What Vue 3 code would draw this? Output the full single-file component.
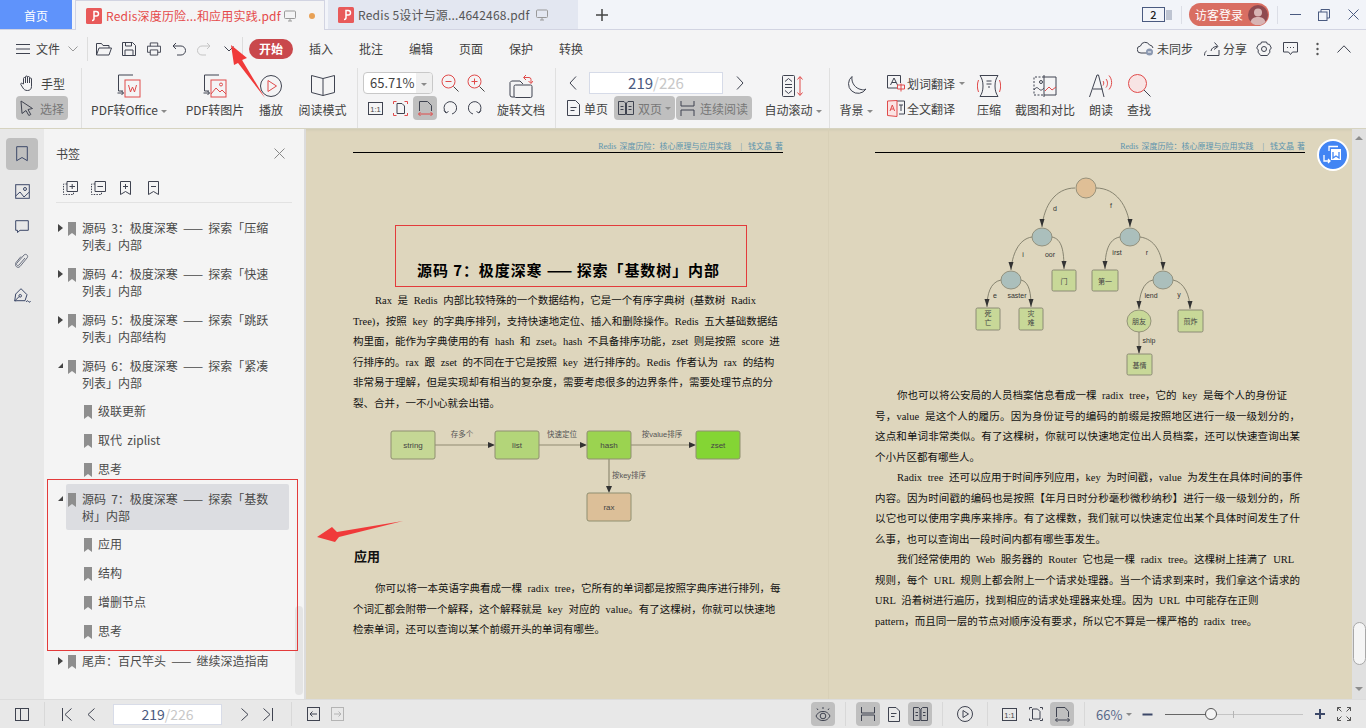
<script setup>
const bookmarks = [
  { text: '源码 3：极度深寒 —— 探索「压缩列表」内部', arrow: 'closed' },
  { text: '源码 4：极度深寒 —— 探索「快速列表」内部', arrow: 'closed' },
  { text: '源码 5：极度深寒 —— 探索「跳跃列表」内部结构', arrow: 'closed' },
  { text: '源码 6：极度深寒 —— 探索「紧凑列表」内部', arrow: 'open' },
  { text: '级联更新', child: true },
  { text: '取代 ziplist', child: true },
  { text: '思考', child: true },
  { text: '源码 7：极度深寒 —— 探索「基数树」内部', arrow: 'open', active: true },
  { text: '应用', child: true },
  { text: '结构', child: true },
  { text: '增删节点', child: true },
  { text: '思考', child: true },
  { text: '尾声：百尺竿头 —— 继续深造指南', arrow: 'closed', single: true }
]

const introLines = [
  { t: 'Rax 是 Redis 内部比较特殊的一个数据结构，它是一个有序字典树 (基数树 Radix', i: true, w: 380 },
  { t: 'Tree)，按照 key 的字典序排列，支持快速地定位、插入和删除操作。Redis 五大基础数据结', w: 424 },
  { t: '构里面，能作为字典使用的有 hash 和 zset。hash 不具备排序功能，zset 则是按照 score 进', w: 424 },
  { t: '行排序的。rax 跟 zset 的不同在于它是按照 key 进行排序的。Redis 作者认为 rax 的结构', w: 418 },
  { t: '非常易于理解，但是实现却有相当的复杂度，需要考虑很多的边界条件，需要处理节点的分', w: 420 },
  { t: '裂、合并，一不小心就会出错。' }
]

const usageLines = [
  { t: '你可以将一本英语字典看成一棵 radix tree，它所有的单词都是按照字典序进行排列，每', i: true, w: 403 },
  { t: '个词汇都会附带一个解释，这个解释就是 key 对应的 value。有了这棵树，你就可以快速地', w: 421 },
  { t: '检索单词，还可以查询以某个前缀开头的单词有哪些。' }
]

const rightLines = [
  { t: '你也可以将公安局的人员档案信息看成一棵 radix tree，它的 key 是每个人的身份证', i: true, w: 388 },
  { t: '号，value 是这个人的履历。因为身份证号的编码的前缀是按照地区进行一级一级划分的，', w: 425 },
  { t: '这点和单词非常类似。有了这棵树，你就可以快速地定位出人员档案，还可以快速查询出某', w: 425 },
  { t: '个小片区都有哪些人。' },
  { t: 'Radix tree 还可以应用于时间序列应用，key 为时间戳，value 为发生在具体时间的事件', i: true, w: 403 },
  { t: '内容。因为时间戳的编码也是按照【年月日时分秒毫秒微秒纳秒】进行一级一级划分的，所', w: 425 },
  { t: '以它也可以使用字典序来排序。有了这棵数，我们就可以快速定位出某个具体时间发生了什', w: 425 },
  { t: '么事，也可以查询出一段时间内都有哪些事发生。' },
  { t: '我们经常使用的 Web 服务器的 Router 它也是一棵 radix tree。这棵树上挂满了 URL', i: true, w: 395 },
  { t: '规则，每个 URL 规则上都会附上一个请求处理器。当一个请求到来时，我们拿这个请求的', w: 425 },
  { t: 'URL 沿着树进行遍历，找到相应的请求处理器来处理。因为 URL 中可能存在正则', w: 381 },
  { t: 'pattern，而且同一层的节点对顺序没有要求，所以它不算是一棵严格的 radix tree。', w: 349 }
]

const flowBoxes = [
  { x: 391, y: 431, label: 'string', fill: '#c5d795' },
  { x: 495, y: 431, label: 'list', fill: '#b3d579' },
  { x: 587, y: 431, label: 'hash', fill: '#9bd350' },
  { x: 696, y: 431, label: 'zset', fill: '#84d534' },
  { x: 587, y: 493, label: 'rax', fill: '#dcbf98' }
]

const flowLabels = [
  { x: 462, y: 437, t: '存多个' },
  { x: 562, y: 437, t: '快速定位' },
  { x: 662, y: 437, t: '按value排序' },
  { x: 629, y: 478, t: '按key排序' }
]

const treeEdges = [
  'M1075 187C1055 187 1044 205 1042 226',
  'M1096 187C1116 187 1128 205 1130 226',
  'M1032 236C1018 238 1012 255 1011 269',
  'M1052 236C1062 238 1064 250 1064 268',
  'M1120 236C1108 238 1105 252 1105 268',
  'M1140 236C1155 238 1162 252 1163 269',
  'M1001 279C990 281 987 294 987 306',
  'M1021 279C1030 281 1031 294 1031 306',
  'M1153 279C1143 281 1139 294 1139 308',
  'M1173 279C1184 281 1190 294 1190 308',
  'M1139 331V352'
]

const treeCircles = [
  { x: 1086, y: 187, rx: 10, ry: 10, fill: '#dfbf96' },
  { x: 1042, y: 236, rx: 10, ry: 9, fill: '#abbfbc' },
  { x: 1130, y: 236, rx: 10, ry: 9, fill: '#abbfbc' },
  { x: 1011, y: 279, rx: 10, ry: 9, fill: '#abbfbc' },
  { x: 1163, y: 279, rx: 10, ry: 9, fill: '#abbfbc' }
]

const treeBoxes = [
  { x: 1052, y: 269, w: 24, h: 21, t: ['门'] },
  { x: 1092, y: 269, w: 26, h: 21, t: ['第一'] },
  { x: 976, y: 307, w: 24, h: 22, t: ['死', '亡'] },
  { x: 1019, y: 307, w: 24, h: 22, t: ['灾', '难'] },
  { x: 1178, y: 309, w: 25, h: 22, t: ['煎炸'] },
  { x: 1127, y: 353, w: 25, h: 21, t: ['基情'] }
]

const treeLabels = [
  { x: 1055, y: 210, t: 'd' }, { x: 1111, y: 207, t: 'f' },
  { x: 1023, y: 256, t: 'i' }, { x: 1050, y: 256, t: 'oor' },
  { x: 1117, y: 254, t: 'irst' }, { x: 1147, y: 254, t: 'r' },
  { x: 995, y: 297, t: 'e' }, { x: 1017, y: 297, t: 'saster' },
  { x: 1151, y: 297, t: 'lend' }, { x: 1179, y: 296, t: 'y' },
  { x: 1149, y: 342, t: 'ship' }
]

const menuTabs = ['插入', '批注', '编辑', '页面', '保护', '转换']
</script>

<template>
  <div class="app">
    <!-- tab bar -->
    <div class="tabbar">
      <div class="tab-home">首页</div>
      <div class="tab tab-on">
        <svg class="pdf-badge" viewBox="0 0 16 16"><rect width="16" height="16" rx="1.5" fill="#e85a5a"/><path d="M8 3.500h2.200a2.300 2.300 0 0 1 0 4.600H8zM8 8v2.500a2 2 0 0 1-2 2" fill="none" stroke="#fff" stroke-width="1.500"/></svg>
        <span class="tab-name">Redis深度历险...和应用实践.pdf</span>
        <svg class="ic monitor" viewBox="0 0 12 12"><rect x=".5" y="1" width="11" height="7.500" rx="1"/><path d="M4 11h4M6 8.500V11"/></svg>
        <i class="dot"></i>
      </div>
      <div class="tab">
        <svg class="pdf-badge" viewBox="0 0 16 16"><rect width="16" height="16" rx="1.5" fill="#e85a5a"/><path d="M8 3.500h2.200a2.300 2.300 0 0 1 0 4.600H8zM8 8v2.500a2 2 0 0 1-2 2" fill="none" stroke="#fff" stroke-width="1.500"/></svg>
        <span class="tab-name">Redis 5设计与源...4642468.pdf</span>
        <svg class="ic monitor" viewBox="0 0 12 12"><rect x=".5" y="1" width="11" height="7.500" rx="1"/><path d="M4 11h4M6 8.500V11"/></svg>
      </div>
      <svg class="ic plus" viewBox="0 0 12 12"><path d="M6 0v12M0 6h12"/></svg>
      <div class="win">
        <div class="win-count"><b>2</b></div>
        <svg class="ic bars" viewBox="0 0 6 12"><path d="M1 1v10M3 1v10M5 1v10"/></svg>
        <i class="win-sep first"></i>
        <div class="login">
          <span>访客登录</span>
          <svg class="avatar" viewBox="0 0 20 20"><circle cx="10" cy="10" r="10" fill="#8f4a50"/><circle cx="10" cy="7.500" r="4" fill="#d8b4b4"/><path d="M2.500 17c1-4 4-5 7.500-5s6.500 1 7.500 5a10 10 0 0 1-15 0z" fill="#d8b4b4"/></svg>
        </div>
        <i class="win-sep"></i>
        <svg class="ic min" viewBox="0 0 11 11"><path d="M0 5.500h11"/></svg>
        <svg class="ic restore" viewBox="0 0 12 12"><rect x=".5" y="3" width="8.500" height="8.500"/><path d="M3 3V.5h8.500V9H9"/></svg>
        <svg class="ic close" viewBox="0 0 11 11"><path d="M.5.5l10 10M10.500.5l-10 10"/></svg>
      </div>
    </div>

    <!-- menu row -->
    <div class="menubar">
      <svg class="ic burger" viewBox="0 0 14 10"><path d="M0 .5h14M0 5h14M0 9.500h14"/></svg>
      <span class="file">文件</span>
      <svg class="ic caret-d" viewBox="0 0 10 6"><path d="M.5.5L5 5 9.500.5"/></svg>
      <i class="menu-sep sep-file"></i>
      <svg class="ic qa open" viewBox="0 0 16 14"><path d="M.5 13V1.500h5l1.500 2h6V6M.5 13L3 6h12.500L13 13z"/></svg>
      <svg class="ic qa" viewBox="0 0 14 14"><path d="M.5.5h10l3 3v10H.5zM3.500.5v3.500h6V.5M3 13.500V8h8v5.500"/></svg>
      <svg class="ic qa" viewBox="0 0 15 14"><path d="M3.500 4V.5h8V4M3.500 10.500H.5V4h14v6.500h-3M3.500 8h8v5.500h-8z"/></svg>
      <svg class="ic qa" viewBox="0 0 14 13"><path d="M4 .5L1 3.500 4 6.500M1 3.500h8a4 4 0 0 1 0 9H5"/></svg>
      <svg class="ic qa faded" viewBox="0 0 14 13"><path d="M10 .5l3 3-3 3M13 3.500H5a4 4 0 0 0 0 9h4"/></svg>
      <svg class="ic qa small" viewBox="0 0 10 6"><path d="M.5.5L5 5 9.500.5"/></svg>
      <i class="menu-sep sep-quick"></i>
      <div class="pill">开始</div>
      <span v-for="m in menuTabs" :key="m" class="menu-tab">{{ m }}</span>
      <div class="menu-right">
        <svg class="ic cloud" viewBox="0 0 17 15"><path d="M10 12H4a3.500 3.500 0 0 1-.5-7A4.800 4.800 0 0 1 12.500 4 3.800 3.800 0 0 1 16 7"/><circle cx="12.500" cy="11" r="3.500" fill="#8a97b0" stroke="none"/><path d="M10.800 11h3.400" stroke="#fff"/></svg>
        <span class="mr-text">未同步</span>
        <svg class="ic share" viewBox="0 0 16 14"><path d="M.5 13.500c0-3 1-4 2-4.500M15 8v5.500H3M7 9c.5-3 3-4.500 6-4.500M10.500.5L14 4.500 10 7.500"/></svg>
        <span class="mr-text">分享</span>
        <svg class="ic gear" viewBox="0 0 16 16"><path d="M5.500 1h5l.8 2 2.200.4 1.800 3.600-1.600 2 .2 2.200-2.500 3.300H4.600l-2.500-3.300.2-2.200L.7 7l1.800-3.600L4.700 3z"/><circle cx="8" cy="8" r="2.500"/></svg>
        <svg class="ic bubble" viewBox="0 0 15 13"><path d="M.5.500h14v9.500H9.500L7.500 12.500 5.500 10H.5z"/><path d="M4 5.500h1M7 5.500h1M10 5.500h1"/></svg>
        <svg class="kebab" viewBox="0 0 3 14"><circle cx="1.500" cy="2" r="1.200"/><circle cx="1.500" cy="7" r="1.200"/><circle cx="1.500" cy="12" r="1.200"/></svg>
        <svg class="ic up" viewBox="0 0 14 8"><path d="M.5 7.500L7 .8l6.500 6.700"/></svg>
      </div>
    </div>

    <!-- ribbon -->
    <div class="ribbon">
      <div class="stack hand">
        <div class="row-tool">
          <svg class="ic" width="15" height="16" viewBox="0 0 15 16"><path d="M3.500 9V3.500a1 1 0 0 1 2 0V8 2a1 1 0 0 1 2 0v6-5.500a1 1 0 0 1 2 0V8 4a1 1 0 0 1 2 0v7.500c0 2.500-1.500 4-4 4s-3.500-1-4.500-2.500L.8 9.500c-.5-1 .8-1.800 1.500-1z"/></svg>
          <span>手型</span>
        </div>
        <div class="row-tool on">
          <svg class="ic" width="14" height="16" viewBox="0 0 14 16"><path d="M1 1l11.500 7.500-4.500 1 2.800 5-2 1-2.800-5L2 13.500z"/></svg>
          <span class="dim">选择</span>
        </div>
      </div>
      <i class="rsep"></i>

      <div class="col w-office">
        <div class="col-ic">
          <svg class="ic" width="24" height="24" viewBox="0 0 24 24"><path d="M16 1H1.500v16H6"/><path d="M.5 19h6l-2-2M6.500 19l-2 2" /><rect x="8" y="6" width="15" height="17" stroke="#e04b4b"/><path d="M11.500 11l2 7 2-5 2 5 2-7" stroke="#e04b4b"/></svg>
        </div>
        <div class="label">PDF转Office<i class="tri"></i></div>
      </div>
      <div class="col w-img">
        <div class="col-ic">
          <svg class="ic" width="24" height="24" viewBox="0 0 24 24"><path d="M16 1H1.500v16H6"/><path d="M.5 19h6l-2-2M6.500 19l-2 2"/><rect x="8" y="6" width="15" height="17" stroke="#e04b4b"/><circle cx="18" cy="10.500" r="1.500" stroke="#e04b4b"/><path d="M8 20l5-6 4 4 2-2 4 4" stroke="#e04b4b"/></svg>
        </div>
        <div class="label">PDF转图片</div>
      </div>
      <div class="col w-play">
        <div class="col-ic">
          <svg class="ic" width="22" height="22" viewBox="0 0 22 22"><circle cx="11" cy="11" r="10.500"/><path d="M8 5.500l8.500 5.500L8 16.500z" stroke="#e04b4b"/></svg>
        </div>
        <div class="label">播放</div>
      </div>
      <div class="col w-read">
        <div class="col-ic">
          <svg class="ic" width="24" height="21" viewBox="0 0 24 21"><path d="M12 3.500L.5.500v17l11.500 3 11.500-3V.5zM12 3.500v17"/></svg>
        </div>
        <div class="label">阅读模式</div>
      </div>
      <i class="rsep"></i>

      <div class="stack zoom">
        <div class="row-plain">
          <div class="zoom-select"><span>65.71%</span><b><i class="tri"></i></b></div>
          <svg class="ic zbtn" viewBox="0 0 18 18"><circle cx="7.500" cy="7.500" r="6.500" stroke="#e04b4b"/><path d="M4.500 7.500h6" stroke="#e04b4b"/><path d="M12.500 12.500l5 5" stroke="#444"/></svg>
          <svg class="ic zbtn" viewBox="0 0 18 18"><circle cx="7.500" cy="7.500" r="6.500" stroke="#e04b4b"/><path d="M4.500 7.500h6M7.500 4.500v6" stroke="#e04b4b"/><path d="M12.500 12.500l5 5" stroke="#444"/></svg>
        </div>
        <div class="row-plain tight">
          <div class="ib"><svg class="ic" width="15" height="13" viewBox="0 0 15 13"><rect x=".5" y=".5" width="14" height="12"/><text x="7.500" y="9.500" class="one-one">1:1</text></svg></div>
          <div class="ib"><svg class="ic" width="15" height="15" viewBox="0 0 15 15"><path d="M4 2.500h5l2.500 2.500v7.500H4z"/><path d="M.5 3V.5h3M11.500.5h3V3M.5 12v2.500h3M11.500 14.500h3V12" stroke="#e04b4b"/></svg></div>
          <div class="ib on"><svg class="ic" width="15" height="15" viewBox="0 0 15 15"><path d="M1.500 10V.5h8l4 4V10"/><path d="M.5 13h14M2.500 11L.5 13l2 2M12.500 11l2 2-2 2" stroke="#e04b4b"/></svg></div>
          <div class="ib"><svg class="ic" width="14" height="14" viewBox="0 0 14 14"><path d="M9 13A6.300 6.300 0 1 0 3 11.500M1 9.500l2 2.500 2.500-1.500"/></svg></div>
          <div class="ib"><svg class="ic" width="14" height="14" viewBox="0 0 14 14"><path d="M5 13A6.300 6.300 0 1 1 11 11.500M13 9.500L11 12 8.500 10.500"/></svg></div>
        </div>
      </div>
      <div class="col w-rotate">
        <div class="col-ic">
          <svg class="ic" width="24" height="24" viewBox="0 0 24 24"><path d="M1 21V8.500L2.500 7H11l3 3"/><rect x="5" y="11" width="18" height="12.500" rx="1.500"/><path d="M1 21a2 2 0 0 0 2 2h2"/><path d="M15 3.500h5a2 2 0 0 1 2 2V9M17 1l-2.500 2.500L17 6M19.500 7L22 9.500 24 7" stroke="#e04b4b"/></svg>
        </div>
        <div class="label">旋转文档</div>
      </div>
      <i class="rsep gap3"></i>

      <div class="stack pager">
        <div class="row-plain">
          <svg class="ic pg-arrow first" viewBox="0 0 8 14"><path d="M7 .5L1 7l6 6.500"/></svg>
          <div class="pg-input"><span class="cur">219</span><span class="all">/226</span></div>
          <svg class="ic pg-arrow" viewBox="0 0 8 14"><path d="M1 .5L7 7l-6 6.500"/></svg>
        </div>
        <div class="row-plain view-modes">
          <div class="vm single">
            <svg class="ic" width="13" height="16" viewBox="0 0 13 16"><path d="M.5.5h8l4 4v11H.5z"/><path d="M3.500 7.500h6M3.500 10.500h4"/></svg>
            <span>单页</span>
          </div>
          <div class="vm double on">
            <svg class="ic" width="16" height="14" viewBox="0 0 16 14"><path d="M.5.500h5.500l1.500 1.500v11.500H.5zM15.500.500H10L8.500 2v11.500h7zM2.500 5.500H5.500M2.500 8.500H5.500M10.500 5.500h3M10.500 8.500h3"/></svg>
            <span class="dim">双页</span><i class="tri"></i>
          </div>
          <div class="vm cont on">
            <svg class="ic" width="15" height="15" viewBox="0 0 15 15"><path d="M1 0v5h13V0M1 15v-6h13v6"/></svg>
            <span class="dim">连续阅读</span>
          </div>
        </div>
      </div>
      <div class="col w-auto">
        <div class="col-ic">
          <svg class="ic" width="22" height="22" viewBox="0 0 22 22"><rect x=".5" y=".5" width="12" height="21" rx="1"/><path d="M3 6.500l3.500-3 3.500 3M3 15.500l3.500 3 3.500-3M3 9.500h7M3 12.500h7"/><path d="M18 2v18M15.500 4.500L18 1.500l2.500 3M15.500 17.500L18 20.500l2.500-3" stroke="#e04b4b"/></svg>
        </div>
        <div class="label">自动滚动<i class="tri"></i></div>
      </div>
      <i class="rsep"></i>

      <div class="col w-bg">
        <div class="col-ic">
          <svg class="ic" width="21" height="21" viewBox="0 0 21 21"><path d="M6 1.500A9.500 9.500 0 1 0 20 14c-1.500 1-3 1-5 .5C9.500 13.500 5 8 6 1.500z"/></svg>
        </div>
        <div class="label">背景<i class="tri"></i></div>
      </div>
      <div class="stack translate">
        <div class="row-tool">
          <svg class="ic" width="18" height="17" viewBox="0 0 18 17"><path d="M10 13H.5V.5h13V8"/><path d="M3.500 10L7 3l3.500 7M5 7.500h4"/><path d="M10.500 10h7v4h-7zM14 8.500v8" stroke="#e04b4b"/></svg>
          <span>划词翻译</span><i class="tri"></i>
        </div>
        <div class="row-tool">
          <svg class="ic" width="18" height="17" viewBox="0 0 18 17"><path d="M10 1h7.500v13H12"/><path d="M.5 1L10 .5v16l-9.500-1z" stroke="#e04b4b" fill="#fbe4e4"/><path d="M3 11l2.300-6 2.300 6M4 9h2.600" stroke="#e04b4b"/><path d="M12 5h4M14 5v6" /></svg>
          <span>全文翻译</span>
        </div>
      </div>
      <div class="col w-34">
        <div class="col-ic">
          <svg class="ic" width="24" height="22" viewBox="0 0 24 22"><path d="M3 .5h18c-2 3-3 6-3 10.500s1 7.500 3 10.500H3c2-3 3-6 3-10.500S5 3.500 3 .5z"/><path d="M9.500 6h5M9.500 9h5M11 12h2"/><path d="M1.500 5c-1.500 4-1.500 8 0 12M22.500 5c1.500 4 1.500 8 0 12" stroke="#e04b4b"/></svg>
        </div>
        <div class="label">压缩</div>
      </div>
      <div class="col w-cap">
        <div class="col-ic">
          <svg class="ic" width="24" height="22" viewBox="0 0 24 22"><path d="M11 2H1v18h10" stroke-dasharray="2 1.500"/><path d="M11 0v22M11 2h12v18H11"/><circle cx="8" cy="7" r="1.500"/><path d="M1 15c2-3 3-3 5-1s3 1 5-1"/><path d="M12 16l4-4 3 3 4-3" stroke="#e04b4b"/></svg>
        </div>
        <div class="label">截图和对比</div>
      </div>
      <div class="col w-34">
        <div class="col-ic">
          <svg class="ic" width="25" height="24" viewBox="0 0 25 24"><path d="M.5 23L8 1h1.500L15 23M4 15h9.500"/><path d="M14 7c1 1 1 3 0 4.500M17 5c2 2.500 2 6 0 8.500M20 1.500c3.500 4 3.500 10 0 14" stroke="#e04b4b"/></svg>
        </div>
        <div class="label">朗读</div>
      </div>
      <div class="col w-find">
        <div class="col-ic">
          <svg class="ic" width="23" height="23" viewBox="0 0 23 23"><circle cx="9.500" cy="9.500" r="9" stroke="#e04b4b" fill="#f8e4e4"/><path d="M16 16l6.500 6.500"/></svg>
        </div>
        <div class="label">查找</div>
      </div>
    </div>

    <div class="main">
      <!-- left rail -->
      <div class="rail">
        <div class="rail-btn on"><svg class="ic navy" width="12" height="16" viewBox="0 0 12 16"><path d="M.7.7h10.600v14L6 11.500.7 14.700z"/></svg></div>
        <div class="rail-btn"><svg class="ic navy" width="15" height="15" viewBox="0 0 15 15"><rect x=".7" y=".7" width="13.600" height="13.600"/><circle cx="10" cy="5" r="1.500"/><path d="M.7 12l4.300-4 4 5 5.300-5"/></svg></div>
        <div class="rail-btn"><svg class="ic navy" width="14" height="13" viewBox="0 0 14 13"><path d="M.7.7h12.600v9.600H5L2.500 12.500v-2.200H.7z"/></svg></div>
        <div class="rail-btn"><svg class="ic navy gray" width="14" height="16" viewBox="0 0 14 16"><path d="M10 5L4 12c-1.500 1.500-3.500-.5-2-2l7-8c2-2 5 1 3 3l-7 8.500c-2.500 2.500-6-1-4-4l5-6"/></svg></div>
        <div class="rail-btn"><svg class="ic navy" width="17" height="16" viewBox="0 0 17 16"><path d="M7 .7l6 6-2 6H3L.7 13l1-7zM.7 13l4.500-4.500"/><circle cx="6.200" cy="7.800" r="1.300"/><path d="M12 14c1-1.500 2-1.500 2.500-.5s1.500 1 2-.5"/></svg></div>
      </div>

      <!-- bookmarks -->
      <div class="panel">
        <div class="panel-head">
          <span>书签</span>
          <svg class="ic x" viewBox="0 0 11 11"><path d="M.5.5l10 10M10.500.5l-10 10"/></svg>
        </div>
        <div class="panel-tools">
          <svg class="ic pt" viewBox="0 0 15 14"><path d="M4 .5h10.500v10H4z"/><path d="M4 3H.5v10.500h10V10.500" stroke-dasharray="1.500 1.200"/><path d="M6.500 5.500h5.500M9.200 3v5"/></svg>
          <svg class="ic pt" viewBox="0 0 15 14"><path d="M4 .5h10.500v10H4z"/><path d="M4 3H.5v10.500h10V10.500" stroke-dasharray="1.500 1.200"/><path d="M6.500 5.500h5.500"/></svg>
          <svg class="ic pt narrow" viewBox="0 0 11 14"><path d="M.5.5h10v13l-5-3-5 3zM3 5.500h5M5.500 3v5"/></svg>
          <svg class="ic pt narrow" viewBox="0 0 11 14"><path d="M.5.5h10v13l-5-3-5 3zM3 5.500h5"/></svg>
        </div>
        <div class="bm-list">
          <div
            v-for="(b, n) in bookmarks"
            :key="n"
            class="bm"
            :class="{ child: b.child, active: b.active, single: b.child || b.single }"
          >
            <i v-if="b.arrow === 'closed'" class="bm-closed"></i>
            <i v-if="b.arrow === 'open'" class="bm-open"></i>
            <div class="bm-body">
              <svg class="bm-flag" viewBox="0 0 8 14"><path d="M0 0h8v14L4 11 0 14z"/></svg>
              <span class="bm-text">{{ b.text }}</span>
            </div>
          </div>
        </div>
        <div class="panel-scroll"></div>
      </div>
      <div class="splitter"></div>

      <!-- pdf view -->
      <div class="viewer">
        <div class="page left">
          <div class="running">Redis 深度历险：核心原理与应用实践 &nbsp; | &nbsp;钱文晶 著</div>
          <div class="rule"></div>
          <h1 class="chapter">源码 7：极度深寒 —— 探索「基数树」内部</h1>
          <div class="para first">
            <div v-for="(l, n) in introLines" :key="n" class="line" :class="{ indent: l.i, fit: l.w }" :style="l.w ? { width: l.w + 'px' } : null">{{ l.t }}</div>
          </div>
          <svg class="flow" viewBox="390 430 352 94" width="352" height="94">
            <path d="M435 445h55M539 445h43M631 445h60M609 459v29" stroke="#8f8a72" stroke-width="1.200" fill="none"/>
            <path d="M488 442l7 3-7 3zM580 442l7 3-7 3zM689 442l7 3-7 3zM606 486l3 7 3-7z" fill="#333"/>
            <g v-for="b in flowBoxes" :key="b.label">
              <rect :x="b.x" :y="b.y" width="44" height="28" rx="2" :fill="b.fill" stroke="#8f8f70" stroke-width="1"/>
              <text :x="b.x + 22" :y="b.y + 17" class="flow-t">{{ b.label }}</text>
            </g>
            <text v-for="f in flowLabels" :key="f.t" :x="f.x" :y="f.y" class="flow-t small">{{ f.t }}</text>
          </svg>
          <h2 class="sub">应用</h2>
          <div class="para usage">
            <div v-for="(l, n) in usageLines" :key="n" class="line" :class="{ indent: l.i, fit: l.w }" :style="l.w ? { width: l.w + 'px' } : null">{{ l.t }}</div>
          </div>
        </div>

        <div class="page right">
          <div class="running">Redis 深度历险：核心原理与应用实践 &nbsp; | &nbsp;钱文晶 著</div>
          <div class="rule"></div>
          <svg class="tree" viewBox="970 170 240 210" width="240" height="210">
            <path v-for="(e, n) in treeEdges" :key="n" :d="e" fill="none" stroke="#7d7a68" stroke-width=".9"/>
            <path d="M1039.500 218h5l-2.500 8zM1127.500 218h5l-2.500 8zM1008.500 261h5l-2.500 8zM1061.500 260h5l-2.500 8zM1102.500 260h5l-2.500 8zM1160.500 261h5l-2.500 8zM984.500 298h5l-2.500 8zM1028.500 298h5l-2.500 8zM1136.500 300h5l-2.500 8zM1187.500 300h5l-2.500 8zM1136.500 345h5l-2.500 8z" fill="#333"/>
            <ellipse v-for="(c, n) in treeCircles" :key="n" :cx="c.x" :cy="c.y" :rx="c.rx" :ry="c.ry" :fill="c.fill" stroke="#85836f" stroke-width=".8"/>
            <ellipse cx="1139" cy="320" rx="12" ry="11" fill="#c8d898" stroke="#85836f" stroke-width=".8"/>
            <text x="1139" y="323" class="tree-t">朋友</text>
            <g v-for="b in treeBoxes" :key="b.x">
              <rect :x="b.x" :y="b.y" :width="b.w" :height="b.h" rx="1.500" fill="#c8d898" stroke="#85836f" stroke-width=".9"/>
              <text v-for="(t, i) in b.t" :key="t" :x="b.x + b.w / 2" :y="b.t.length > 1 ? b.y + 8 + i * 9 : b.y + b.h / 2 + 3" class="tree-t">{{ t }}</text>
            </g>
            <text v-for="l in treeLabels" :key="l.t" :x="l.x" :y="l.y" class="tree-t lab">{{ l.t }}</text>
          </svg>
          <div class="para tree-para">
            <div v-for="(l, n) in rightLines" :key="n" class="line" :class="{ indent: l.i, fit: l.w }" :style="l.w ? { width: l.w + 'px' } : null">{{ l.t }}</div>
          </div>
        </div>

        <div class="vscroll">
          <i class="sb-up"></i>
          <div class="sb-track"><div class="sb-thumb"></div></div>
          <i class="sb-down"></i>
        </div>
      </div>
    </div>

    <!-- status bar -->
    <div class="status">
      <svg class="ic st-panel" viewBox="0 0 14 13"><rect x=".5" y=".5" width="13" height="12"/><path d="M5.500.5v12"/></svg>
      <i class="st-sep a"></i>
      <svg class="ic st-nav n1" viewBox="0 0 10 13"><path d="M.5 0v13M9.500.5L3 6.500l6.500 6"/></svg>
      <svg class="ic st-nav n2" viewBox="0 0 8 13"><path d="M7.500.5L1 6.500l6.500 6"/></svg>
      <div class="st-input"><span class="cur">219</span><span class="all">/226</span></div>
      <svg class="ic st-nav n3" viewBox="0 0 8 13"><path d="M.5.5L7 6.500l-6.500 6"/></svg>
      <svg class="ic st-nav n4" viewBox="0 0 10 13"><path d="M9.500 0v13M.5.5L7 6.500l-6.500 6"/></svg>
      <i class="st-sep b"></i>
      <svg class="ic st-box" viewBox="0 0 13 14"><rect x=".5" y=".5" width="12" height="13"/><path d="M3 7h7M5.500 4.500L3 7l2.500 2.500"/></svg>
      <svg class="ic st-box light" viewBox="0 0 13 14"><rect x=".5" y=".5" width="12" height="13"/><path d="M3 7h7M7.500 4.500L10 7 7.500 9.500"/></svg>

      <div class="st-right">
        <div class="st-btn on"><svg class="ic" width="16" height="16" viewBox="0 0 16 16"><path d="M1 10c2-3.500 4-4.500 7-4.500s5 1 7 4.500c-2 3.500-4 4.500-7 4.500S3 13.500 1 10z"/><circle cx="8" cy="10" r="2.800"/><path d="M3 4L2 2.500M8 3V1M13 4l1-1.500"/></svg></div>
        <i class="st-sep mid"></i>
        <div class="st-btn on"><svg class="ic" width="14" height="14" viewBox="0 0 14 14"><path d="M.5 0v6h13V0M.5 14V8h13v6"/></svg></div>
        <div class="st-btn mini"><svg class="ic" width="12" height="15" viewBox="0 0 12 15"><path d="M.5.5h7.500l3.500 3.500v10.500H.5zM3 6.500h5.500M3 9.500h3.500"/></svg></div>
        <div class="st-btn on"><svg class="ic" width="15" height="14" viewBox="0 0 15 14"><path d="M.5.500h5l1.500 1.500v11.500H.5zM14.500.500h-5L8 2v11.500h6.500zM2.500 5.500h2.500M2.500 8.500h2.500M10 5.500h2.500M10 8.500h2.500"/></svg></div>
        <i class="st-sep mid"></i>
        <svg class="ic st-play" viewBox="0 0 16 16"><circle cx="8" cy="8" r="7.500"/><path d="M6 4.500l5.500 3.500L6 11.500z"/></svg>
        <i class="st-sep mid"></i>
        <svg class="ic st-11" viewBox="0 0 15 13"><rect x=".5" y=".5" width="14" height="12"/><text x="7.500" y="9.500" class="one-one">1:1</text></svg>
        <svg class="ic st-fit" viewBox="0 0 14 14"><path d="M3.500 2h5l2.500 2.500V12H3.500zM.5 2.500V.5h2.500M11 .5h2.500v2M.5 11.500v2h2.500M11 13.500h2.500v-2"/></svg>
        <div class="st-btn on"><svg class="ic" width="15" height="15" viewBox="0 0 15 15"><path d="M1.500 10V.5h8.500l3.500 4V10M.5 13h14M2.500 11L.5 13l2 2M12.500 11l2 2-2 2"/></svg></div>
        <i class="st-sep mid"></i>
        <span class="pct">66%</span><i class="tri"></i>
        <svg class="ic st-minus" viewBox="0 0 10 3"><path d="M0 1.500h10"/></svg>
        <div class="slider"><i class="tick"></i><i class="knob"></i></div>
        <svg class="ic st-plus" viewBox="0 0 10 10"><path d="M5 0v10M0 5h10"/></svg>
        <svg class="ic st-full" viewBox="0 0 14 14"><path d="M.5 4V.5H4M.5.500L4.500 4.500M10 .5h3.500V4M13.500.5L9.500 4.500M.5 10v3.500H4M.5 13.500L4.500 9.500M10 13.500h3.500V10M13.500 13.500L9.500 9.500"/></svg>
      </div>
    </div>

    <!-- things lying over the page: screenshot annotations and the floating button -->
    <div class="box-chapter"></div>
    <div class="box-sidebar"></div>
    <div class="float-btn">
      <svg viewBox="0 0 20 20" width="20" height="20" fill="none" stroke="#fff" stroke-width="1.300"><path d="M6 6V1.500h9"/><rect x="8" y="4" width="10" height="11" fill="#fff" stroke="none"/><path d="M10 7v6l3-2 3 2V7" stroke="#4285f4"/><path d="M1 10v6h6M5 14l2 2-2 2"/></svg>
    </div>
    <svg class="marks" viewBox="0 0 1366 728">
      <polygon points="231,45 247,58 242,60 265,98 238,63 234,65" fill="#f03a3a"/>
      <polygon points="317,537 332,527 337,532 403,521 339,537 335,542" fill="#f03a3a"/>
    </svg>
  </div>
</template>

<style scoped>
.app {
  position: relative;
  width: 1366px;
  height: 728px;
  overflow: hidden;
  display: flex;
  flex-direction: column;
  background: #f4f4f5;
  color: #424242;
  font-family: "Noto Sans CJK SC", "Liberation Sans", sans-serif;
  font-size: 12px;
}

i { display: block; font-style: normal; }
svg { display: block; flex: none; }

.ic {
  fill: none;
  stroke: #3f4350;
  stroke-width: 1;
}

.one-one {
  font: 7.500px "Liberation Sans", sans-serif;
  text-anchor: middle;
  fill: #444;
  stroke: none;
}

.tri {
  display: inline-block;
  width: 0;
  height: 0;
  margin-left: 3px;
  vertical-align: middle;
  border-left: 3px solid transparent;
  border-right: 3px solid transparent;
  border-top: 3px solid #8a8a8a;
}

.dim { color: #777; }

/* tab bar */
.tabbar {
  height: 29px;
  flex: none;
  display: flex;
  align-items: flex-end;
  background: #f2f4f9;
  border-bottom: 1px solid #d2d4e2;
  box-sizing: content-box;
}

.tab-home {
  width: 72px;
  height: 29px;
  line-height: 31px;
  text-align: center;
  color: #fff;
  font-size: 12px;
  background: #5f93fb;
}

.tab {
  width: 250px;
  height: 29px;
  margin-left: 3px;
  display: flex;
  align-items: center;
  padding-left: 10px;
  box-sizing: border-box;
  background: #e3e7f1;
  color: #555;
  font-size: 12px;
  letter-spacing: .2px;
}

.tab-on {
  background: #f4f4f5;
  color: #e5494a;
  border: 1px solid #d2d4e2;
  border-bottom: none;
  height: 30px;
  margin-bottom: -1px;
  position: relative;
}

.pdf-badge { width: 16px; height: 16px; }
.tab-name { margin-left: 4px; width: 174px; white-space: nowrap; }
.monitor { width: 12px; height: 12px; margin-left: 4px; stroke: #999; }
.dot { width: 6px; height: 6px; margin-left: 13px; border-radius: 50%; background: #e8a155; }

.plus { width: 12px; height: 12px; margin: 0 0 8px 18px; stroke: #444; stroke-width: 1.500; }

.win {
  margin-left: auto;
  height: 29px;
  display: flex;
  align-items: center;
}

.win-count {
  width: 21px;
  height: 13px;
  border: 1px solid #4a5a80;
  text-align: center;
  line-height: 13px;
  font-size: 11px;
  color: #222;
  box-sizing: content-box;
}

.win-count b { font-weight: 500; }
.bars { width: 6px; height: 12px; margin-left: 1px; stroke: #8a94aa; }
.win-sep { width: 1px; height: 18px; background: #dcdee6; margin-left: 8px; }
.win-sep.first { margin-left: 9px; }

.login {
  margin-left: 7px;
  width: 80px;
  height: 23px;
  padding-left: 6px;
  display: flex;
  align-items: center;
  box-sizing: border-box;
  border-radius: 12px;
  background: #d96e62;
  color: #fff;
}

.login span { width: 53px; line-height: 16px; letter-spacing: 0; }
.avatar { width: 20px; height: 20px; }
.min { width: 11px; height: 11px; margin-left: 12px; stroke: #4a5a80; }
.restore { width: 12px; height: 12px; margin-left: 17px; stroke: #4a5a80; }
.close { width: 11px; height: 11px; margin: 0 7px 0 18px; stroke: #4a5a80; }

/* menu row */
.menubar {
  height: 33px;
  flex: none;
  padding-top: 4px;
  box-sizing: border-box;
  display: flex;
  align-items: center;
}

.burger { width: 14px; height: 10px; margin-left: 16px; }
.file { margin-left: 6px; font-size: 12px; width: 24px; }
.caret-d { width: 10px; height: 6px; margin-left: 8px; stroke: #999; }
.menu-sep { width: 1px; height: 24px; background: #ddd; }
.menu-sep.sep-file { margin-left: 9px; margin-right: 8px; }
.menu-sep.sep-quick { margin-left: 8px; margin-right: 6px; }
.qa { width: 14px; height: 14px; margin-right: 11px; }
.qa.open { width: 16px; margin-right: 10px; }
.qa.faded { stroke: #c4c4c4; margin-right: 13px; }
.qa.small { width: 10px; height: 6px; margin-right: 0; }

.pill {
  width: 44px;
  height: 20px;
  line-height: 20px;
  text-align: center;
  border-radius: 10px;
  background: #c9484c;
  color: #fff;
  font-weight: 700;
  margin-right: 16px;
}

.menu-tab { width: 24px; margin-right: 26px; }

.menu-right {
  margin-left: auto;
  display: flex;
  align-items: center;
  padding-right: 15px;
}

.cloud { width: 17px; height: 15px; }
.mr-text { margin-left: 3px; }
.share { width: 16px; height: 14px; margin-left: 11px; }
.gear { width: 16px; height: 16px; margin-left: 9px; }
.bubble { width: 15px; height: 13px; margin-left: 11px; }
.kebab { width: 3px; height: 14px; margin-left: 18px; fill: #555; }
.up { width: 14px; height: 8px; margin-left: 18px; }

/* ribbon */
.ribbon {
  height: 65px;
  flex: none;
  display: flex;
  border-bottom: 1px solid #d6d3c0;
  box-sizing: content-box;
}

.rsep { width: 1px; height: 60px; margin-top: 5px; background: #e0e0e0; flex: none; }
.rsep.gap3 { margin-left: 3px; }

.col {
  flex: none;
  padding-top: 6px;
  display: flex;
  flex-direction: column;
  align-items: center;
}

.col-ic {
  height: 33px;
  display: flex;
  align-items: center;
}

.label { line-height: 16px; white-space: nowrap; }
.w-office { width: 94px; }
.w-img { width: 78px; }
.w-play { width: 34px; }
.w-read { width: 69px; }
.w-rotate { width: 62px; }
.w-auto { width: 72px; }
.w-bg { width: 52px; }
.w-34 { width: 34px; }
.w-cap { width: 78px; }
.w-find { width: 42px; }

.stack {
  flex: none;
  padding-top: 8px;
  display: flex;
  flex-direction: column;
  gap: 1px;
}

.row-tool {
  height: 24px;
  display: flex;
  align-items: center;
  gap: 6px;
  border-radius: 3px;
}

.row-plain {
  height: 24px;
  display: flex;
  align-items: center;
}

.on { background: #bfbfbf; border-radius: 4px; }

.hand { width: 81px; box-sizing: border-box; padding-left: 16px; padding-right: 13px; }
.hand .row-tool { padding-left: 4px; }

.zoom { width: 132px; box-sizing: border-box; padding-left: 5px; }

.zoom-select {
  width: 70px;
  height: 22px;
  display: flex;
  box-sizing: border-box;
  border: 1px solid #c8c8c8;
  border-radius: 4px;
  background: #fff;
  font-size: 13px;
  line-height: 20px;
  overflow: hidden;
}

.zoom-select span { flex: 1; padding-left: 6px; }
.zoom-select b { width: 16px; background: #efefef; }
.zoom-select .tri { margin-left: 5px; }

.zbtn { width: 18px; height: 18px; margin-left: 8px; }

.tight { gap: 1px; }

.ib {
  width: 24px;
  height: 24px;
  display: flex;
  align-items: center;
  justify-content: center;
}

.pager { width: 201px; box-sizing: border-box; }
.pg-arrow { width: 8px; height: 14px; margin: 0 8px 0 13px; }
.pg-arrow.first { margin: 0 12px 0 13px; }

.pg-input {
  width: 134px;
  height: 22px;
  box-sizing: border-box;
  border: 1px solid #d6dbe8;
  background: #fff;
  text-align: center;
  font-size: 15px;
  line-height: 20px;
  margin-right: 0;
}

.cur { color: #4a5a80; }
.all { color: #c8c8c8; }

.view-modes { padding-left: 11px; }

.vm {
  height: 24px;
  display: flex;
  align-items: center;
  box-sizing: border-box;
  gap: 4px;
  flex: none;
}

.vm.single { width: 47px; }
.vm.double { width: 61px; padding-left: 4px; margin-right: 1px; }
.vm.double .tri { margin-left: -1px; }
.vm.cont { width: 76px; padding-left: 4px; gap: 5px; }
.translate { width: 90px; box-sizing: border-box; padding-left: 5px; }
.translate .row-tool { gap: 2px; }
.translate .tri { margin-left: 2px; }

/* main */
.main {
  flex: 1;
  min-height: 0;
  display: flex;
}

.rail {
  width: 44px;
  flex: none;
  padding-top: 9px;
  box-sizing: border-box;
  background: #e8e8e8;
}

.rail-btn {
  width: 32px;
  height: 32px;
  margin: 0 0 3px 6px;
  display: flex;
  align-items: center;
  justify-content: center;
}

.rail-btn.on { margin-bottom: 5px; }

.navy { stroke: #3c4868; }
.navy.gray { stroke: #6a7080; }

.panel {
  position: relative;
  width: 260px;
  flex: none;
  background: #f4f4f4;
}

.panel-head {
  height: 48px;
  padding: 0 19px 0 12px;
  display: flex;
  align-items: center;
  justify-content: space-between;
  font-size: 12px;
}

.x { width: 11px; height: 11px; stroke: #888; }

.panel-tools {
  margin: 0 12px;
  height: 21px;
  padding: 4px 0 0 7px;
  display: flex;
  align-items: flex-start;
  gap: 13px;
  border-bottom: 1px solid #e2e2e2;
  box-sizing: content-box;
}

.pt { width: 15px; height: 14px; }
.pt.narrow { width: 11px; margin-left: 1px; margin-right: 3px; }

.bm-list { padding-top: 10px; }

.bm {
  position: relative;
  height: 46px;
  padding-left: 22px;
  box-sizing: border-box;
}

.bm.single { height: 29px; }
.bm.child { padding-left: 40px; }

.bm-body {
  display: flex;
  width: 223px;
  height: 100%;
  box-sizing: border-box;
  padding: 6px 10px 0 2px;
  border-radius: 2px;
}

.bm.child .bm-body { padding: 5px 0 0 0; width: auto; }
.bm.active .bm-body { background: #dcdde1; }

.bm-flag {
  width: 8px;
  height: 14px;
  margin-top: 3px;
  fill: #8e8e8e;
  flex: none;
}

.bm-text {
  margin-left: 6px;
  width: 196px;
  line-height: 17px;
  font-size: 12px;
  word-spacing: 2.500px;
  color: #4a4a4a;
}

.bm-closed {
  position: absolute;
  left: 14px;
  top: 11px;
  width: 0;
  height: 0;
  border-top: 4px solid transparent;
  border-bottom: 4px solid transparent;
  border-left: 5px solid #444;
}

.bm-open {
  position: absolute;
  left: 14px;
  top: 12px;
  width: 0;
  height: 0;
  border-left: 5px solid transparent;
  border-bottom: 5px solid #444;
}

.panel-scroll {
  position: absolute;
  right: 1px;
  bottom: 4px;
  width: 8px;
  height: 89px;
  border-radius: 4px;
  background: #e4e4e4;
}

.splitter { width: 2px; flex: none; background: #dcdcdc; }

.viewer {
  flex: 1;
  min-width: 0;
  display: flex;
  background: #ded6bd;
  box-shadow: inset 0 3px 3px -2px #cfc9b4;
}

.page {
  flex: none;
  box-sizing: border-box;
  padding-top: 11px;
  color: #111;
  font-family: "Liberation Serif", "Noto Sans CJK SC", serif;
}

.page.left { width: 523px; padding-left: 47px; border-right: 1px solid #d8d0b7; }
.page.right { width: 523px; padding-left: 46px; }

.running {
  width: 430px;
  height: 12px;
  line-height: 14px;
  text-align: right;
  font-size: 8px;
  word-spacing: 1px;
  color: #5b93ad;
  white-space: nowrap;
}

.rule { width: 430px; height: 1px; background: #000; }

.chapter {
  margin: 107px 0 0 64px;
  width: 302px;
  height: 20px;
  line-height: 20px;
  font-size: 15px;
  font-weight: 700;
  color: #000;
  white-space: nowrap;
  text-align: justify;
  text-align-last: justify;
  font-family: "Noto Sans CJK SC", sans-serif;
}

.para { font-size: 10.500px; word-spacing: 3px; }
.para.first { margin-top: 11px; }
.para.usage { margin-top: 13px; }
.para.tree-para { margin-top: 5px; }

.line {
  height: 20.500px;
  line-height: 20.500px;
  white-space: nowrap;
}

.line.indent { margin-left: 22px; }
.line.fit { text-align: justify; text-align-last: justify; }

.flow { margin: 16px 0 0 37px; }

.flow-t {
  font: 8px "Liberation Sans", "Noto Sans CJK SC", sans-serif;
  text-anchor: middle;
  fill: #444;
}

.flow-t.small { font-size: 7.500px; fill: #555; }

.sub {
  margin: 22px 0 0 1px;
  height: 20px;
  line-height: 20px;
  font-size: 13px;
  font-weight: 700;
  color: #111;
  font-family: "Noto Sans CJK SC", sans-serif;
}

.tree { margin: 18px 0 0 95px; }

.tree-t {
  font: 7px "Liberation Sans", "Noto Sans CJK SC", sans-serif;
  text-anchor: middle;
  fill: #444;
}

.tree-t.lab { fill: #333; }

.vscroll {
  width: 14px;
  flex: none;
  position: relative;
  background: #e0e0e0;
  display: flex;
  flex-direction: column;
  align-items: center;
}

.sb-up {
  margin-top: 7px;
  width: 0;
  height: 0;
  border-left: 4px solid transparent;
  border-right: 4px solid transparent;
  border-bottom: 4px solid #8d8d8d;
}

.sb-down {
  margin-bottom: 8px;
  width: 0;
  height: 0;
  border-left: 4px solid transparent;
  border-right: 4px solid transparent;
  border-top: 4px solid #8d8d8d;
}

.sb-track { flex: 1; padding-top: 482px; }

.sb-thumb {
  width: 13px;
  height: 43px;
  box-sizing: border-box;
  border: 1px solid #a8a8a8;
  border-radius: 7px;
  background: #f5f5f5;
}

/* status bar */
.status {
  height: 29px;
  flex: none;
  display: flex;
  align-items: center;
  background: #e8e8e8;
  border-top: 1px solid #dcdcdc;
  box-sizing: border-box;
}

.st-panel { width: 14px; height: 13px; margin-left: 15px; }
.st-sep { width: 1px; height: 24px; background: #d8d8d8; flex: none; }
.st-sep.a { margin-left: 15px; }
.st-nav { height: 13px; }
.n1 { width: 10px; margin-left: 17px; }
.n2 { width: 8px; margin-left: 15px; }
.n3 { width: 8px; margin-left: 19px; }
.n4 { width: 10px; margin-left: 14px; }
.st-sep.b { margin-left: 18px; }

.st-input {
  width: 109px;
  height: 21px;
  margin-left: 18px;
  box-sizing: border-box;
  border: 1px solid #d8dce8;
  background: #fff;
  text-align: center;
  font-size: 14px;
  line-height: 19px;
}

.st-box { width: 13px; height: 14px; margin-left: 15px; }
.st-box.light { margin-left: 11px; stroke: #b4b4b4; }

.st-right {
  margin-left: auto;
  display: flex;
  align-items: center;
  padding-right: 15px;
}

.st-btn {
  width: 24px;
  height: 24px;
  display: flex;
  align-items: center;
  justify-content: center;
}

.st-btn.mini { width: 22px; margin: 0 3px; }
.st-right .st-sep.mid { margin: 0 10px; }
.st-play { width: 16px; height: 16px; margin: 0 4px; }
.st-11 { width: 15px; height: 13px; margin: 0 6px 0 4px; }
.st-fit { width: 14px; height: 14px; margin: 0 7px 0 6px; }
.pct { width: 24px; font-size: 13px; color: #5a6a8a; margin-left: 1px; white-space: nowrap; }
.st-right .tri { margin-left: 6px; }
.st-minus { width: 11px; height: 3px; margin-left: 10px; stroke: #3c4868; stroke-width: 2; }

.slider {
  position: relative;
  width: 138px;
  height: 1px;
  margin-left: 12px;
  background: linear-gradient(to right, #666 0 46px, #c4c4c4 46px);
}

.tick { position: absolute; left: 68px; top: -3px; width: 1px; height: 7px; background: #b4b4b4; }

.knob {
  position: absolute;
  left: 40px;
  top: -6px;
  width: 12px;
  height: 12px;
  box-sizing: border-box;
  border: 1px solid #555;
  border-radius: 50%;
  background: #f4f4f4;
}

.st-plus { width: 10px; height: 10px; margin-left: 12px; stroke: #3c4868; stroke-width: 2; }
.st-full { width: 14px; height: 14px; margin-left: 12px; stroke: #555; }

/* overlays */
.box-chapter {
  position: absolute;
  left: 395px;
  top: 225px;
  width: 352px;
  height: 62px;
  box-sizing: border-box;
  border: 1px solid #e33b3b;
}

.box-sidebar {
  position: absolute;
  left: 47px;
  top: 479px;
  width: 251px;
  height: 172px;
  box-sizing: border-box;
  border: 1px solid #e33b3b;
}

.float-btn {
  position: absolute;
  left: 1317px;
  top: 139px;
  width: 32px;
  height: 32px;
  box-sizing: border-box;
  border: 2px solid #fff;
  border-radius: 50%;
  background: #4285f4;
  display: flex;
  align-items: center;
  justify-content: center;
}

.marks {
  position: absolute;
  left: 0;
  top: 0;
  width: 1366px;
  height: 728px;
  pointer-events: none;
}
</style>
